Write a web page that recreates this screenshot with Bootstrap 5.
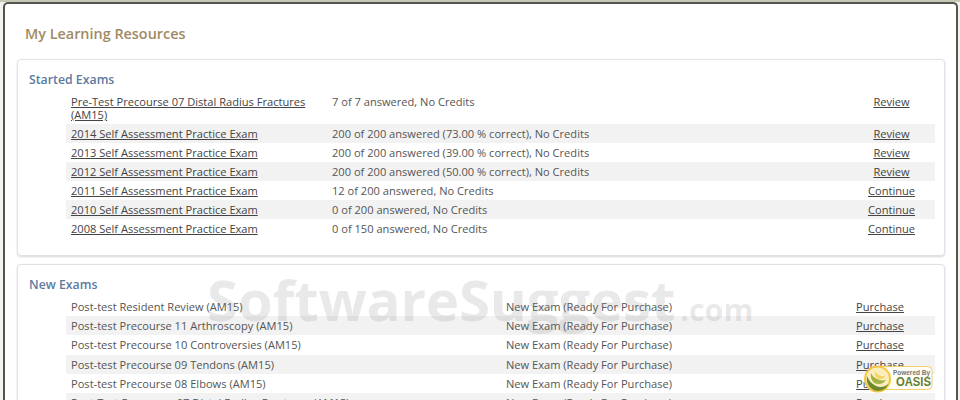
<!DOCTYPE html>
<html lang="en">
<head>
<meta charset="utf-8">
<title>My Learning Resources</title>
<link href="https://cdn.jsdelivr.net/npm/bootstrap@5.3.0/dist/css/bootstrap.min.css" rel="stylesheet">
<style>
html,body{height:400px;overflow:hidden}
body{background:#f3f3ee;font-family:"Open Sans",sans-serif;font-size:11.1px;color:#555;position:relative}
.topstrip{background:#c8c7b6;height:2px}
.shell{margin-left:3px;width:955px;height:398px;overflow:hidden;background:#fff;border:2px solid #55554f;border-bottom:0;border-radius:5px 5px 0 0;padding:0 12px}
.shell-title{font-size:14.4px;font-weight:600;color:#a08a63;margin:0;padding:20px 8px 0;line-height:20px;height:55px}
.panel{background:#fff;border:1px solid #dfe3e8;border-radius:4px;box-shadow:0 1px 2px rgba(90,105,125,.25);margin-bottom:8px;padding:11px 8px 0 11px;width:928px}
.panel-first{height:197px}
.panel-title{font-size:12.3px;font-weight:600;color:#5c7aa0;margin:0 0 3px;line-height:18px}
.panel-first .panel-title{margin-bottom:6px}
.exam-table{margin-left:37px;width:869px;table-layout:fixed;border-collapse:collapse}
.exam-table td{padding:0 0 0 5px;line-height:13px;height:19px;vertical-align:middle;color:#555}
.fresh td{height:19.2px}
.exam-table tr:nth-child(even) td{background:#f2f2f2}
.exam-table a{color:#444;text-decoration:underline}
.exam-table .act{text-align:center;padding:0 4px 0 0}
.started .c1{width:261px}.started .c2{width:525px}.started .c3{width:83px}
.fresh .c1{width:435px}.fresh .c2{width:330px}.fresh .c3{width:104px}
.fresh .act{padding-right:6px}
.tall td{height:29px;padding-bottom:2px;vertical-align:top}
.wm{position:absolute;left:207px;top:270px;font-weight:700;font-size:56.4px;line-height:60px;color:rgba(120,120,120,.16);letter-spacing:-.2px;white-space:nowrap;pointer-events:none}
.wm-dot{font-size:30.5px;letter-spacing:0;margin-left:5px}
.oasis{position:absolute;left:863px;top:364px;width:72px;height:32px}
</style>
</head>
<body>
<div class="topstrip"></div>
<main class="shell">
  <h1 class="shell-title">My Learning Resources</h1>
  <section class="panel panel-first">
    <h2 class="panel-title">Started Exams</h2>
    <table class="exam-table started">
      <colgroup><col class="c1"><col class="c2"><col class="c3"></colgroup>
      <tbody>
      <tr class="tall"><td><a href="#">Pre-Test Precourse 07 Distal Radius Fractures (AM15)</a></td><td>7 of 7 answered, No Credits</td><td class="act"><a href="#">Review</a></td></tr>
      <tr><td><a href="#">2014 Self Assessment Practice Exam</a></td><td>200 of 200 answered (73.00 % correct), No Credits</td><td class="act"><a href="#">Review</a></td></tr>
      <tr><td><a href="#">2013 Self Assessment Practice Exam</a></td><td>200 of 200 answered (39.00 % correct), No Credits</td><td class="act"><a href="#">Review</a></td></tr>
      <tr><td><a href="#">2012 Self Assessment Practice Exam</a></td><td>200 of 200 answered (50.00 % correct), No Credits</td><td class="act"><a href="#">Review</a></td></tr>
      <tr><td><a href="#">2011 Self Assessment Practice Exam</a></td><td>12 of 200 answered, No Credits</td><td class="act"><a href="#">Continue</a></td></tr>
      <tr><td><a href="#">2010 Self Assessment Practice Exam</a></td><td>0 of 200 answered, No Credits</td><td class="act"><a href="#">Continue</a></td></tr>
      <tr><td><a href="#">2008 Self Assessment Practice Exam</a></td><td>0 of 150 answered, No Credits</td><td class="act"><a href="#">Continue</a></td></tr>
      </tbody>
    </table>
  </section>
  <section class="panel">
    <h2 class="panel-title">New Exams</h2>
    <table class="exam-table fresh">
      <colgroup><col class="c1"><col class="c2"><col class="c3"></colgroup>
      <tbody>
      <tr><td>Post-test Resident Review (AM15)</td><td>New Exam (Ready For Purchase)</td><td class="act"><a href="#">Purchase</a></td></tr>
      <tr><td>Post-test Precourse 11 Arthroscopy (AM15)</td><td>New Exam (Ready For Purchase)</td><td class="act"><a href="#">Purchase</a></td></tr>
      <tr><td>Post-test Precourse 10 Controversies (AM15)</td><td>New Exam (Ready For Purchase)</td><td class="act"><a href="#">Purchase</a></td></tr>
      <tr><td>Post-test Precourse 09 Tendons (AM15)</td><td>New Exam (Ready For Purchase)</td><td class="act"><a href="#">Purchase</a></td></tr>
      <tr><td>Post-test Precourse 08 Elbows (AM15)</td><td>New Exam (Ready For Purchase)</td><td class="act"><a href="#">Purchase</a></td></tr>
      <tr><td>Post-Test Precourse 07 Distal Radius Fractures (AM15)</td><td>New Exam (Ready For Purchase)</td><td class="act"><a href="#">Purchase</a></td></tr>
      </tbody>
    </table>
  </section>
</main>
<div class="wm">SoftwareSuggest<span class="wm-dot">.com</span></div>
<svg class="oasis" viewBox="0 0 72 32" role="img" aria-label="Powered By OASIS">
  <rect x="12" y="2.5" width="57" height="23" rx="4" fill="#fffdf4" stroke="#f2cd6e" stroke-width="1"/>
  <circle cx="14.5" cy="15" r="13.5" fill="#f6c445"/>
  <circle cx="14.5" cy="15" r="11.5" fill="#fbeebb"/>
  <path d="M4 12c-1.500 8 4 15 11 15 5 0 9-3 10-7-3 3-8 4-12 2-4-2-7-5-9-10z" fill="#6f8a2c"/>
  <path d="M8 9c-1 6 2 11 7.500 11 3 0 6-1.500 7.500-4.500-3 1.500-6 1-9-.5-3-1.500-5-3.500-6-6z" fill="#a3b244"/>
  <path d="M12 6c-1 4.500 1 9 5 9 2.500 0 4.500-1 5.500-3.500-3 1-5.500.5-7.500-1-1.800-1.200-3-2.500-3-4.500z" fill="#f3d468"/>
  <text x="48.500" y="10.500" text-anchor="middle" font-family="Liberation Sans, sans-serif" font-size="6.500" font-weight="700" fill="#777">Powered By</text>
  <text x="50.500" y="21.500" text-anchor="middle" font-family="Liberation Sans, sans-serif" font-size="12" font-weight="700" fill="#5f7f35" textLength="35" lengthAdjust="spacingAndGlyphs">OASIS</text>
</svg>
<script src="https://cdn.jsdelivr.net/npm/bootstrap@5.3.0/dist/js/bootstrap.bundle.min.js"></script>
</body>
</html>
